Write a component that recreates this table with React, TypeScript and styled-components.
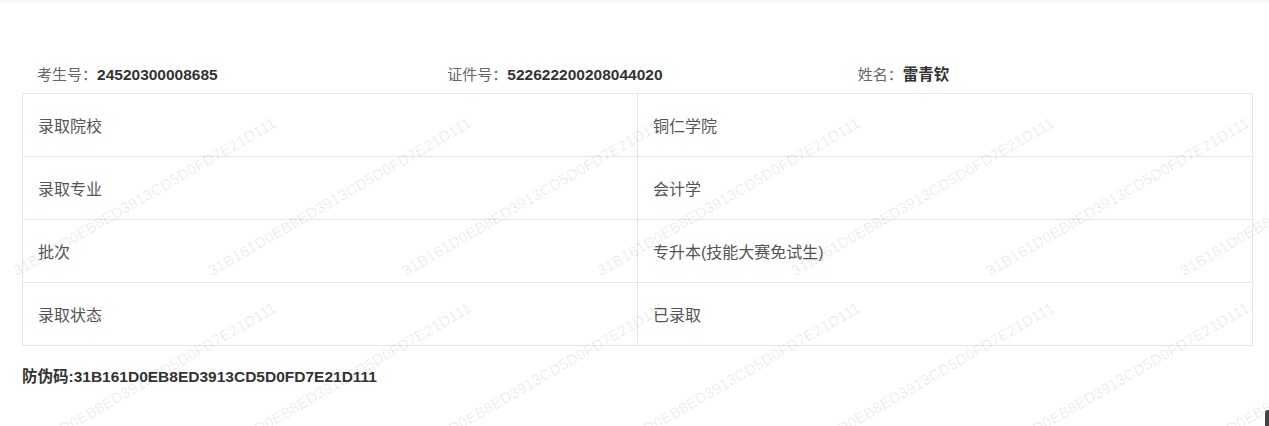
import styled, { createGlobalStyle } from "styled-components";

const CODE = "31B161D0EB8ED3913CD5D0FD7E21D111";

const rows = [
  { label: "录取院校", value: "铜仁学院" },
  { label: "录取专业", value: "会计学" },
  { label: "批次", value: "专升本(技能大赛免试生)" },
  { label: "录取状态", value: "已录取" },
];

const info = [
  { label: "考生号", value: "24520300008685" },
  { label: "证件号", value: "522622200208044020" },
  { label: "姓名", value: "雷青钦" },
];

export default function App() {
  return (
    <Page>
      <GlobalStyle />
      <TopShade />
      <Content>
        <InfoRow>
          {info.map((f) => (
            <Field key={f.label}>
              <Label>{f.label}：</Label>
              <Value>{f.value}</Value>
            </Field>
          ))}
        </InfoRow>
        <Table>
          <tbody>
            {rows.map((r) => (
              <tr key={r.label}>
                <Cell>{r.label}</Cell>
                <Cell>{r.value}</Cell>
              </tr>
            ))}
          </tbody>
        </Table>
        <Code>防伪码:{CODE}</Code>
      </Content>
      {/* repeated anti-forgery watermark over the page */}
      <Watermark>
        {Array.from({ length: 14 }).map((_, i) => (
          <Mark key={i}>
            <span>{CODE}</span>
          </Mark>
        ))}
      </Watermark>
      <CornerTab />
    </Page>
  );
}

const GlobalStyle = createGlobalStyle`
  html, body {
    margin: 0;
    padding: 0;
    background: #ffffff;
  }
  body {
    font-family: "Liberation Sans", "Noto Sans CJK SC", sans-serif;
    color: #333;
  }
`;

const Page = styled.div`
  position: relative;
  min-height: 426px;
  overflow: hidden;
`;

const TopShade = styled.div`
  height: 3px;
  background: linear-gradient(#f6f6f6, #fdfdfd);
`;

const Content = styled.div`
  padding: 50px 16px 0 22px;
`;

const InfoRow = styled.div`
  display: grid;
  grid-template-columns: repeat(3, 1fr);
  align-items: center;
  height: 40px;
`;

const Field = styled.div`
  padding-left: 15px;
  font-size: 15px;
  white-space: nowrap;
`;

const Label = styled.span`
  color: #666;
`;

const Value = styled.span`
  color: #333;
  font-weight: bold;
  font-size: 15.5px;
`;

const Table = styled.table`
  width: 100%;
  border-collapse: collapse;
  table-layout: fixed;
`;

const Cell = styled.td`
  width: 50%;
  height: 62px;
  padding: 0 15px;
  border: 1px solid #e6e6e6;
  font-size: 16px;
  color: #555;
`;

const Code = styled.div`
  margin-top: 21px;
  font-size: 15.5px;
  line-height: 20px;
  font-weight: bold;
  color: #333;
`;

const Watermark = styled.div`
  position: absolute;
  left: 18px;
  top: 263px;
  display: grid;
  grid-template-columns: repeat(7, 194.5px);
  grid-auto-rows: 185px;
  pointer-events: none;
`;

const Mark = styled.div`
  span {
    display: block;
    width: max-content;
    font-size: 15px;
    line-height: 15px;
    letter-spacing: 0.3px;
    color: rgba(0, 0, 0, 0.09);
    transform: rotate(-30deg);
    transform-origin: 0 100%;
  }
`;

const CornerTab = styled.div`
  position: absolute;
  right: 0;
  bottom: 0;
  width: 4px;
  height: 16px;
  background: #444;
  border-radius: 3px 0 0 0;
`;
